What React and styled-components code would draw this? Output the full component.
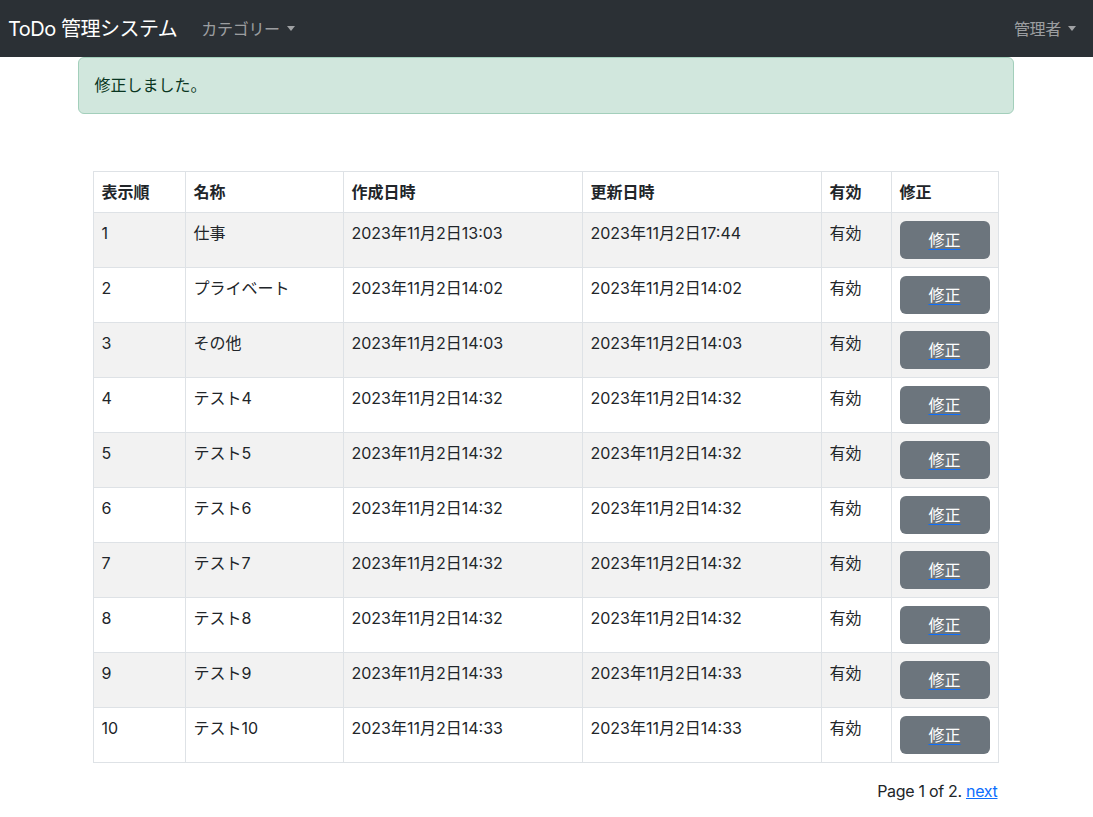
import React from 'react'
import styled, { createGlobalStyle } from 'styled-components'

const rows = [
    { order: 1, name: '仕事', created: '2023年11月2日13:03', updated: '2023年11月2日17:44' },
    { order: 2, name: 'プライベート', created: '2023年11月2日14:02', updated: '2023年11月2日14:02' },
    { order: 3, name: 'その他', created: '2023年11月2日14:03', updated: '2023年11月2日14:03' },
    { order: 4, name: 'テスト4', created: '2023年11月2日14:32', updated: '2023年11月2日14:32' },
    { order: 5, name: 'テスト5', created: '2023年11月2日14:32', updated: '2023年11月2日14:32' },
    { order: 6, name: 'テスト6', created: '2023年11月2日14:32', updated: '2023年11月2日14:32' },
    { order: 7, name: 'テスト7', created: '2023年11月2日14:32', updated: '2023年11月2日14:32' },
    { order: 8, name: 'テスト8', created: '2023年11月2日14:32', updated: '2023年11月2日14:32' },
    { order: 9, name: 'テスト9', created: '2023年11月2日14:33', updated: '2023年11月2日14:33' },
    { order: 10, name: 'テスト10', created: '2023年11月2日14:33', updated: '2023年11月2日14:33' },
]

const App = () => {
    return (
        <>
            <GlobalStyle />
            <Navbar>
                <NavLeft>
                    <Brand>ToDo 管理システム</Brand>
                    <NavLink>カテゴリー<Caret /></NavLink>
                </NavLeft>
                <NavLink>管理者<Caret /></NavLink>
            </Navbar>
            <Container>
                <Alert>修正しました。</Alert>
                <Inner>
                    <Table>
                        <colgroup>
                            <col style={{ width: 92 }} />
                            <col style={{ width: 158 }} />
                            <col style={{ width: 239 }} />
                            <col style={{ width: 239 }} />
                            <col style={{ width: 70 }} />
                            <col style={{ width: 107 }} />
                        </colgroup>
                        <thead>
                            <tr>
                                <Th>表示順</Th>
                                <Th>名称</Th>
                                <Th>作成日時</Th>
                                <Th>更新日時</Th>
                                <Th>有効</Th>
                                <Th>修正</Th>
                            </tr>
                        </thead>
                        <tbody>
                            {rows.map((r, i) => (
                                <Row key={r.order} $striped={i % 2 === 0}>
                                    <Td>{r.order}</Td>
                                    <Td>{r.name}</Td>
                                    <Td>{r.created}</Td>
                                    <Td>{r.updated}</Td>
                                    <Td>有効</Td>
                                    <Td>
                                        <EditButton><EditLink href="#">修正</EditLink></EditButton>
                                    </Td>
                                </Row>
                            ))}
                        </tbody>
                    </Table>
                    <Pager>
                        Page 1 of 2. <PagerLink href="#">next</PagerLink>
                    </Pager>
                </Inner>
            </Container>
        </>
    )
}

export default App

const GlobalStyle = createGlobalStyle`
    body{
        margin: 0;
        background: #fff;
        color: #212529;
        font-family: Inter, "Noto Sans CJK JP", sans-serif;
        font-size: 16px;
        line-height: 1.5;
    }
    *{
        box-sizing: border-box;
    }
`

const Navbar = styled.nav`
    height: 57px;
    background: #2b3035;
    display: flex;
    justify-content: space-between;
    align-items: center;
    padding: 0 9px 0 8px;
`

const NavLeft = styled.div`
    display: flex;
    align-items: center;
`

const Brand = styled.div`
    color: #fff;
    font-size: 20px;
    line-height: 30px;
    letter-spacing: -0.5px;
    margin-right: 16px;
`

const NavLink = styled.div`
    color: rgba(255, 255, 255, 0.55);
    padding: 8px;
    display: flex;
    align-items: center;
    letter-spacing: -0.3px;
`

const Caret = styled.span`
    display: inline-block;
    margin-left: 7px;
    width: 0;
    height: 0;
    border-top: 5px solid rgba(255, 255, 255, 0.55);
    border-left: 4.5px solid transparent;
    border-right: 4.5px solid transparent;
`

const Container = styled.div`
    width: 960px;
    margin: 0 auto;
    padding: 0 12.5px 0 11.5px;
    position: relative;
    left: -0.5px;
`

const Alert = styled.div`
    background: #d1e7dd;
    border: 1px solid #a3cfbb;
    border-radius: 6px;
    color: #0a3622;
    padding: 15px 16px;
    height: 57px;
`

const Inner = styled.div`
    padding: 57px 15px 0;
`

const Table = styled.table`
    width: 905px;
    border-collapse: collapse;
    table-layout: fixed;
    margin-bottom: 16px;
`

const Th = styled.th`
    text-align: left;
    font-weight: 700;
    padding: 8px;
    border: 1px solid #dee2e6;
    line-height: 24px;
    height: 41px;
`

const Row = styled.tr`
    background: ${p => p.$striped ? '#f2f2f2' : '#fff'};
`

const Td = styled.td`
    vertical-align: top;
    padding: 8px;
    border: 1px solid #dee2e6;
    line-height: 24px;
    height: 55px;
`

const EditButton = styled.div`
    display: flex;
    align-items: center;
    justify-content: center;
    width: 100%;
    height: 38px;
    background: #6c757d;
    border-radius: 6px;
`

const EditLink = styled.a`
    color: #fff;
    text-decoration: underline;
    text-decoration-color: #0d6efd;
    text-underline-offset: 3px;
`

const Pager = styled.div`
    text-align: right;
    width: 905px;
    letter-spacing: -0.3px;
`

const PagerLink = styled.a`
    color: #0d6efd;
    text-decoration: underline;
`
